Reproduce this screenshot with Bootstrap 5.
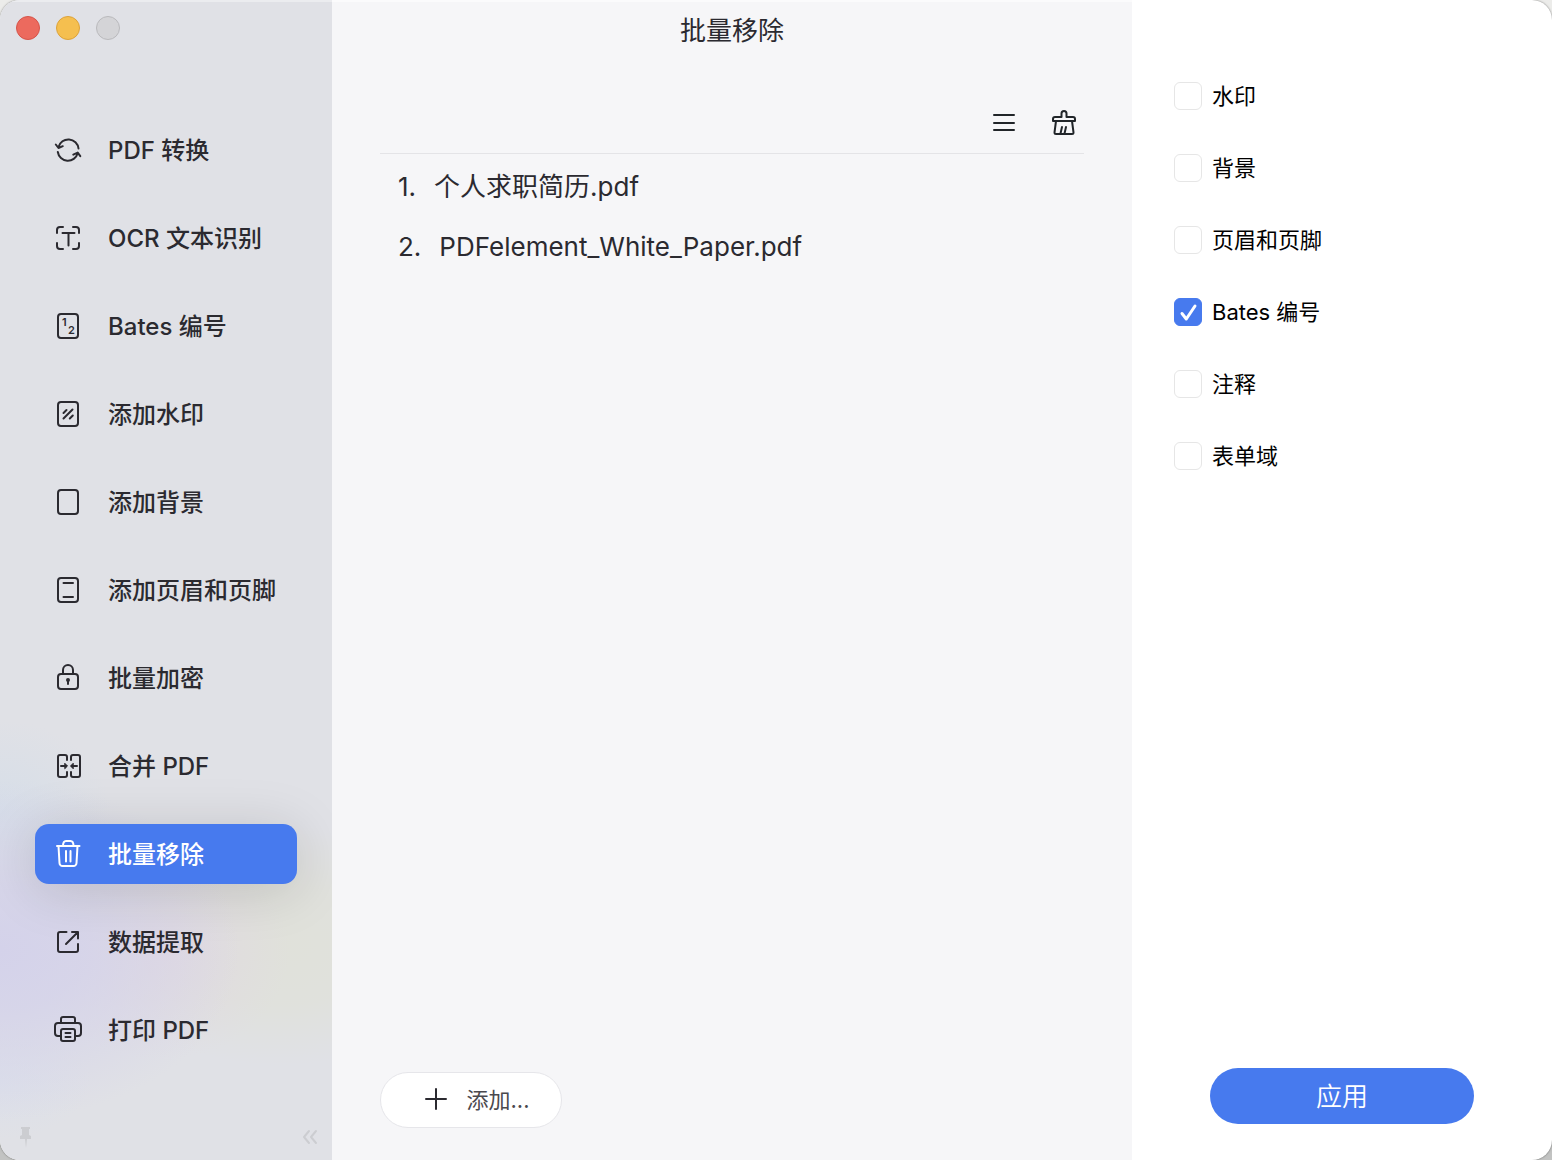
<!DOCTYPE html>
<html lang="zh-CN">
<head>
<meta charset="utf-8">
<meta name="viewport" content="width=device-width, initial-scale=1">
<title>批量移除</title>
<link href="https://cdn.jsdelivr.net/npm/bootstrap@5.3.0/dist/css/bootstrap.min.css" rel="stylesheet">
<style>
  :root { --accent: #477aee; --ink: #2b2a30; }
  body {
    font-family: Inter, "Noto Sans CJK SC", sans-serif;
    color: var(--ink);
    background: linear-gradient(#ececea 0 50%, #c2c3c2 50%);
  }
  .app-window { border-radius: 20px; background: #fff; box-shadow: 0 0 2px rgba(0, 0, 0, .5); }
  .app-window svg { flex: none; fill: none; stroke: currentColor; stroke-width: 2; stroke-linecap: round; stroke-linejoin: round; }

  /* Sidebar */
  .side-pane {
    width: 332px;
    background:
      radial-gradient(ellipse 240px 170px at 0 950px, #d4d2ea 0, #d4d2eacc 35%, #d4d2ea00 100%),
      radial-gradient(ellipse 130px 110px at 160px 950px, #e0d9e1 0, #e0d9e100 100%),
      radial-gradient(ellipse 190px 120px at 280px 945px, #e0e1da 0, #e0e1dacc 50%, #e0e1da00 100%),
      radial-gradient(ellipse 110px 90px at 0 810px, #d6dee8 0, #d6dee800 100%),
      radial-gradient(ellipse 90px 60px at 0 1080px, #dce0ea 0, #dce0ea00 100%),
      #e0e1e6;
    box-shadow: inset 0 2px 0 #ebecef;
  }
  .lights { padding: 16px 16px 80px; gap: 16px; }
  .light { width: 24px; height: 24px; border-radius: 50%; border: 1px solid; padding: 0; }
  .light-close { background: #ec6a5e; border-color: #d5544a; }
  .light-min { background: #f5bf4f; border-color: #dca23a; }
  .light-max { background: #d4d4d7; border-color: #b9b9bc; }
  .tool-nav { gap: 28px; padding: 0 35px; }
  .tool-nav .nav-link {
    height: 60px; padding: 2px 17px 0; gap: 24px; border-radius: 14px;
    font-size: 24px; line-height: 36px; font-weight: 500; color: var(--ink); white-space: nowrap;
  }
  .tool-nav svg { margin-bottom: 2px; }
  .tool-nav .nav-link.active { background: var(--accent); color: #fff; box-shadow: 0 6px 54px rgba(0, 0, 0, .15); }
  .tool-nav text { font: 600 11px Inter, sans-serif; fill: currentColor; stroke: none; }
  .side-foot { padding: 0 12px 8px 16px; color: #cccdd1; }
  .side-foot .btn { color: inherit; }

  /* File list */
  .file-pane { background: #f6f6f8; padding: 0 48px 32px; box-shadow: inset 0 2px 0 #fbfbfc; }
  .pane-title { font-size: 26px; line-height: 62px; font-weight: 400; }
  .file-tools { height: 92px; padding: 30px 4px 0; gap: 28px; border-bottom: 1px solid #e4e4e7; }
  .file-list { padding: 3px 0 0 18px; font-size: 26px; line-height: 60px; }
  .file-list li { gap: 18px; }
  .add-btn {
    height: 56px; width: 182px; gap: 14px; padding: 0 0 0 8px; font-size: 22px; color: #4a494e;
    background: #fff; border: 1px solid #e6e6ea; border-radius: 28px;
  }
  .add-btn svg { color: var(--ink); }

  /* Options */
  .option-pane { width: 420px; padding: 60px 42px 36px; }
  .option-row { height: 72px; gap: 10px; color: #000; font-size: 22px; line-height: 32px; }
  .option-row .form-check-input { width: 28px; height: 28px; margin: 0; border-radius: 6px; border: 1px solid #e6e6e6; }
  .option-row .form-check-input:checked {
    background-color: var(--accent); border-color: var(--accent);
    background-size: 28px;
    background-image: url("data:image/svg+xml,%3Csvg xmlns='http://www.w3.org/2000/svg' viewBox='0 0 28 28'%3E%3Cpath d='M8 15.5l4.3 5.5L21 8' fill='none' stroke='%23fff' stroke-width='3' stroke-linecap='round' stroke-linejoin='round'/%3E%3C/svg%3E");
  }
  .apply-btn { width: 264px; height: 56px; padding: 0; border-radius: 28px; background: var(--accent); color: #fff; font-size: 26px; font-weight: 350; }
</style>
</head>
<body>
<div class="app-window d-flex min-vh-100 overflow-hidden">

  <aside class="side-pane d-flex flex-column flex-shrink-0">
    <div class="lights d-flex">
      <button class="light light-close" type="button" aria-label="关闭"></button>
      <button class="light light-min" type="button" aria-label="最小化"></button>
      <button class="light light-max" type="button" aria-label="缩放" disabled></button>
    </div>
    <nav class="tool-nav nav nav-pills flex-column flex-nowrap">
      <a class="nav-link d-flex align-items-center" href="#">
        <svg width="32" height="32" viewBox="0 0 32 32"><path d="M6.500 13a10.200 10.200 0 0 1 20 1.500M3.800 10.500l2.700 3.500 4.300-1.800M5.800 18a10.200 10.200 0 0 0 19.900 1.300M21.300 20.600l4.400-2 2.600 3.600"/></svg>PDF 转换</a>
      <a class="nav-link d-flex align-items-center" href="#">
        <svg width="32" height="32" viewBox="0 0 32 32"><path d="M5 11V8a3 3 0 0 1 3-3h3M21 5h3a3 3 0 0 1 3 3v3M27 21v3a3 3 0 0 1-3 3h-3M11 27H8a3 3 0 0 1-3-3v-3M10.500 11h12M16.500 11v12.500"/></svg>OCR 文本识别</a>
      <a class="nav-link d-flex align-items-center" href="#">
        <svg width="32" height="32" viewBox="0 0 32 32"><rect x="6" y="4" width="20" height="24" rx="3"/><text x="10" y="16">1</text><text x="16" y="24">2</text></svg>Bates 编号</a>
      <a class="nav-link d-flex align-items-center" href="#">
        <svg width="32" height="32" viewBox="0 0 32 32"><rect x="6" y="4" width="20" height="24" rx="3"/><path d="M11.500 20.500l9-9M11.500 15l3-3M17.800 20.500l3-3"/></svg>添加水印</a>
      <a class="nav-link d-flex align-items-center" href="#">
        <svg width="32" height="32" viewBox="0 0 32 32"><rect x="6" y="4" width="20" height="24" rx="3"/></svg>添加背景</a>
      <a class="nav-link d-flex align-items-center" href="#">
        <svg width="32" height="32" viewBox="0 0 32 32"><rect x="6" y="4" width="20" height="24" rx="3"/><path d="M11.500 9h9.500M11.500 23h9.500"/></svg>添加页眉和页脚</a>
      <a class="nav-link d-flex align-items-center" href="#">
        <svg width="32" height="32" viewBox="0 0 32 32"><rect x="6" y="12" width="20" height="15" rx="3"/><path d="M11 12V8a5 5 0 0 1 10 0v4M16 18v4"/><circle cx="16" cy="18" r="1" fill="currentColor"/></svg>批量加密</a>
      <a class="nav-link d-flex align-items-center" href="#">
        <svg width="32" height="32" viewBox="0 0 32 32"><path d="M15 10V7a2 2 0 0 0-2-2H8a2 2 0 0 0-2 2v18a2 2 0 0 0 2 2h5a2 2 0 0 0 2-2v-3M19 10V7a2 2 0 0 1 2-2h5a2 2 0 0 1 2 2v18a2 2 0 0 1-2 2h-5a2 2 0 0 1-2-2v-3M9 16h5M25 16h-5"/><path d="M13 13.500l2.500 2.500-2.500 2.500zM21 13.500l-2.500 2.500 2.500 2.500z" fill="currentColor" stroke-width="1"/></svg>合并 PDF</a>
      <a class="nav-link active d-flex align-items-center" href="#" aria-current="page">
        <svg width="32" height="32" viewBox="0 0 32 32"><path d="M5 8h22.500M11 8c0-3.500 1-5 3-5h4.500c2 0 3 1.500 3 5M6.500 8l1 17a3 3 0 0 0 3 3h11a3 3 0 0 0 3-3l1-17M14 13v10.500M18.500 13v10.500"/></svg>批量移除</a>
      <a class="nav-link d-flex align-items-center" href="#">
        <svg width="32" height="32" viewBox="0 0 32 32"><path d="M14.500 6H8a2 2 0 0 0-2 2v16a2 2 0 0 0 2 2h16a2 2 0 0 0 2-2v-6M20 6h6v6.500M26 6L14 18"/></svg>数据提取</a>
      <a class="nav-link d-flex align-items-center" href="#">
        <svg width="32" height="32" viewBox="0 0 32 32"><path d="M9 9V5a2 2 0 0 1 2-2h10a2 2 0 0 1 2 2v4M8 22H6a3 3 0 0 1-3-3v-7a3 3 0 0 1 3-3h20a3 3 0 0 1 3 3v7a3 3 0 0 1-3 3h-2M13.500 19h5M13.500 23h5"/><rect x="9" y="15" width="14" height="12" rx="2"/></svg>打印 PDF</a>
    </nav>
    <div class="side-foot d-flex justify-content-between align-items-center mt-auto">
      <button class="btn p-0 border-0 d-flex" type="button" aria-label="固定"><svg width="20" height="32" viewBox="0 0 20 32"><path d="M5 7h9v2h-1v6l2 1v3h-4l-1 9-1-9H4v-3l2-1V9H5z" fill="currentColor" stroke="none"/></svg></button>
      <button class="btn p-0 border-0 d-flex" type="button" aria-label="收起侧栏"><svg width="20" height="32" viewBox="0 0 20 32"><path d="M9 11l-5 6 5 6M16 11l-5 6 5 6"/></svg></button>
    </div>
  </aside>

  <main class="file-pane d-flex flex-column flex-grow-1">
    <h1 class="pane-title text-center m-0">批量移除</h1>
    <div class="file-tools d-flex justify-content-end align-items-center">
      <button class="btn p-0 border-0 d-flex" type="button" aria-label="列表"><svg width="32" height="32" viewBox="0 0 32 32"><path d="M6 8h20M6 16h20M6 23h20"/></svg></button>
      <button class="btn p-0 border-0 d-flex" type="button" aria-label="清空"><svg width="32" height="32" viewBox="0 0 32 32"><path d="M13.500 10V6.500a2.500 2.500 0 0 1 5 0V10H25a2 2 0 0 1 2 2v2H5v-2a2 2 0 0 1 2-2zM8 14L6.500 25.500a1.500 1.500 0 0 0 1.500 1.500h16a1.500 1.500 0 0 0 1.500-1.500L24 14M14 20l-1.500 6.500M18 20l-1.500 6.500"/></svg></button>
    </div>
    <ol class="file-list list-unstyled m-0">
      <li class="d-flex"><span>1.</span><span>个人求职简历.pdf</span></li>
      <li class="d-flex"><span>2.</span><span>PDFelement_White_Paper.pdf</span></li>
    </ol>
    <button class="add-btn btn d-flex align-items-center justify-content-center mt-auto" type="button">
      <svg width="32" height="32" viewBox="0 0 32 32"><path d="M6 15h20M16 5v20"/></svg>添加...</button>
  </main>

  <form class="option-pane d-flex flex-column flex-shrink-0">
    <div class="option-row d-flex align-items-center"><input class="form-check-input" type="checkbox" id="opt-watermark"><label for="opt-watermark">水印</label></div>
    <div class="option-row d-flex align-items-center"><input class="form-check-input" type="checkbox" id="opt-background"><label for="opt-background">背景</label></div>
    <div class="option-row d-flex align-items-center"><input class="form-check-input" type="checkbox" id="opt-header"><label for="opt-header">页眉和页脚</label></div>
    <div class="option-row d-flex align-items-center"><input class="form-check-input" type="checkbox" id="opt-bates" checked><label for="opt-bates">Bates 编号</label></div>
    <div class="option-row d-flex align-items-center"><input class="form-check-input" type="checkbox" id="opt-comment"><label for="opt-comment">注释</label></div>
    <div class="option-row d-flex align-items-center"><input class="form-check-input" type="checkbox" id="opt-form"><label for="opt-form">表单域</label></div>
    <button class="apply-btn btn mt-auto mx-auto" type="button">应用</button>
  </form>
</div>
<script src="https://cdn.jsdelivr.net/npm/bootstrap@5.3.0/dist/js/bootstrap.bundle.min.js"></script>
</body>
</html>
